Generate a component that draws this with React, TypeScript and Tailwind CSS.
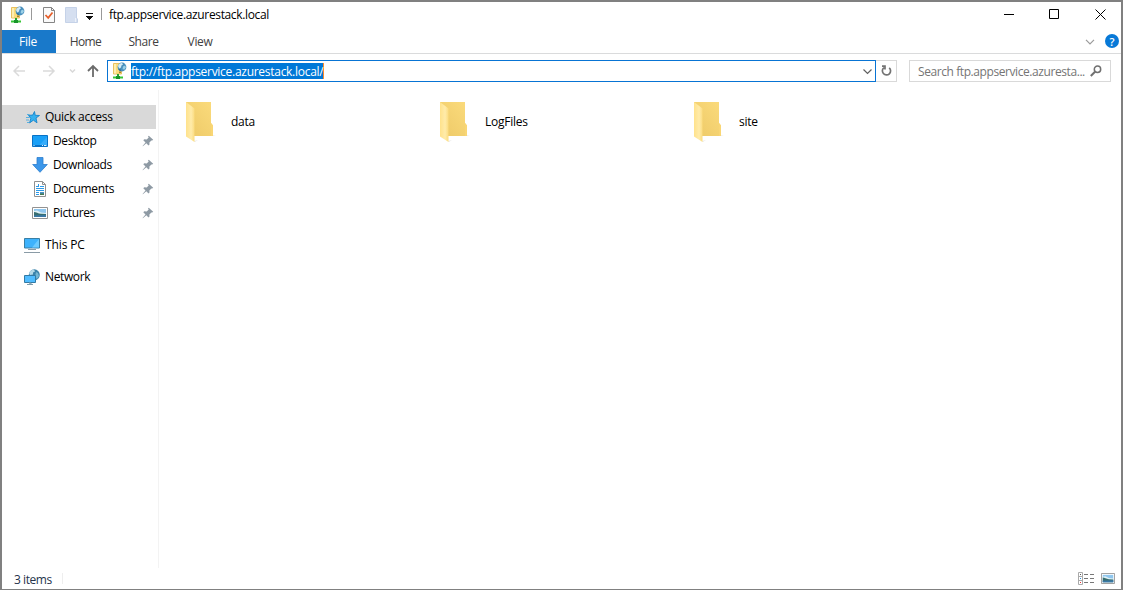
import React from "react";

function FtpIcon() {
  return (
    <svg width="16" height="18" viewBox="0 0 16 18" className="shrink-0">
      <path d="M1.500 1.500h8v10.500h-8z" fill="#fbdc7c" stroke="#e8c060" />
      <path d="M2 2h2v9.500H2z" fill="#fdeeb0" />
      <path d="M7 9.500h2V11H7z" fill="#a8842c" />
      <circle cx="10" cy="5" r="4.400" fill="#4a90bd" />
      <path d="M6 4c.7-1.800 2.300-3 4-3l1 1.400-1.600 1-.4 2-1.800 1.200z" fill="#d5ebf5" />
      <path d="M11 4.600l2.200-1.200.6 2-1.200 2.200-2-.4z" fill="#9bd0e8" />
      <path d="M6.100 7.300l2.200-.3 1 2.300c-1.400-.1-2.500-.9-3.200-2z" fill="#2c6d9b" />
      <path d="M5 12h2v2.500H5z" fill="#24a52c" />
      <path d="M1 14.500h10v2H1z" fill="#35c535" />
      <path d="M4 14h4v3H4z" fill="#18942a" />
    </svg>
  );
}

function PropertiesIcon() {
  return (
    <svg width="12" height="16" viewBox="0 0 12 16" className="shrink-0">
      <path d="M.5.500h8l3 3v12H.5z" fill="#fafafa" stroke="#858585" />
      <path d="M8.500.5v3h3" fill="none" stroke="#858585" />
      <path d="M2.500 8l2.700 2.900L9.500 5.500" fill="none" stroke="#e65f2b" strokeWidth="1.700" />
    </svg>
  );
}

function NewFolderIcon() {
  return (
    <svg width="13" height="16" viewBox="0 0 13 16" className="shrink-0">
      <path d="M.5.500h11v10.500l1 1v3.500H.5z" fill="#d5dff0" stroke="#c5d2e8" />
      <path d="M10.500 11v4" stroke="#edf2fa" />
    </svg>
  );
}

function StarIcon() {
  return (
    <svg width="14" height="13" viewBox="0 0 14 13" className="shrink-0">
      <path d="M8.500.500l.7 3.800 4.300.2-3.500 2.500 1 4.800-3.600-2.600-3.800 2.700 1.200-4.500L2.500 4.300l4.200-.2z" fill="#35b0ee" stroke="#1683cb" strokeWidth=".9" />
      <path d="M1 3.500h2.500M0 6.500h3.500M0 9h3M1 11.500h2" stroke="#4bacdf" strokeWidth=".9" />
    </svg>
  );
}

function DesktopIcon() {
  return (
    <svg width="16" height="12" viewBox="0 0 16 12" className="shrink-0">
      <path d="M.5.500h15v11H.5z" fill="#19a0f7" stroke="#0872c6" />
      <path d="M7 10.500L15 2v8.500z" fill="#38adfb" />
      <path d="M1 10.500h14" stroke="#0872c6" />
      <path d="M1.500 10.500h1M10 10.500h1M12 10.500h2.500" stroke="#d7f0ff" />
    </svg>
  );
}

function DownloadIcon() {
  return (
    <svg width="16" height="16" viewBox="0 0 16 16" className="shrink-0">
      <path d="M5 .5h6v7h4.300L8 15.300.7 7.500H5z" fill="#3c97ea" stroke="#2c7dce" strokeWidth=".8" />
    </svg>
  );
}

function DocumentIcon() {
  return (
    <svg width="12" height="16" viewBox="0 0 12 16" className="shrink-0">
      <path d="M.5.500h8l3 3v12H.5z" fill="#fff" stroke="#909090" />
      <path d="M8.500.500v3h3" fill="none" stroke="#909090" />
      <path d="M2 5.500h2M4.500 3v3M6 5.500h4M2 7.500h8M2 9.500h8M2 11.500h3M2 13.500h3" fill="none" stroke="#2d9ae8" />
      <path d="M6 11h4v3H6z" fill="#4b91c4" />
      <path d="M6 12.500h4V14H6z" fill="#477b54" />
    </svg>
  );
}

function PictureIcon({ small = false }: { small?: boolean }) {
  return (
    <svg width={small ? 14 : 16} height={small ? 11 : 12} viewBox="0 0 16 12" preserveAspectRatio="none" className="shrink-0">
      <path d="M.5.500h15v11H.5z" fill="#fff" stroke="#929292" />
      <path d="M2 2h12v8H2z" fill="#8fc6ee" />
      <path d="M2 4l3-.5 4 2 5 .5v2H2z" fill="#dff1f6" />
      <path d="M2 5c2 .2 4 1.500 7 1.800l5 .2v3H2z" fill="#386e70" />
      <path d="M2 8.500l12-.5v2H2z" fill="#3a78a6" />
    </svg>
  );
}

function ComputerIcon() {
  return (
    <svg width="16" height="15" viewBox="0 0 16 15" className="shrink-0">
      <path d="M.5.500h15v9.500H.5z" fill="#3db2fc" stroke="#397fa5" />
      <path d="M8 9.500L15 1v8.500z" fill="#6bcaff" />
      <path d="M6 10.500h4v1H6z" fill="#b9cbd4" />
      <path d="M4 11.500h8M0 14.500h16" stroke="#8a9ba6" />
    </svg>
  );
}

function NetworkIcon() {
  return (
    <svg width="16" height="16" viewBox="0 0 16 16" className="shrink-0">
      <circle cx="10.300" cy="5.800" r="5.500" fill="#3b83aa" />
      <path d="M5 4c1-2 3-3.500 5-3.500l1 2-2 1v2L6 6z" fill="#b6d9e7" />
      <path d="M12 3l2 1 1 3-2 3-2-2z" fill="#73b5d2" />
      <path d="M.5 6.500h11v7H.5z" fill="#50bcff" stroke="#327aa5" />
      <path d="M5 14h2v1H5M3 15.500h6" fill="none" stroke="#7e9cab" />
    </svg>
  );
}

function Pin() {
  return (
    <svg width="12" height="12" viewBox="0 0 12 12" className="shrink-0">
      <path d="M6.800.800l4.400 4-1 .8-.8-.1-2 2 .1 2.100-1 1-2.200-2.400L.9 11.300l-.3-.3 2.900-3.500-2.200-2.200 1-1 2.400.1 2-1.900-.7-.9z" fill="#8e9aa4" />
    </svg>
  );
}

function Folder() {
  return (
    <svg width="30" height="42" viewBox="0 0 30 42" className="shrink-0">
      <defs>
        <linearGradient id="folderBack" x1="0" y1="1" x2="1" y2="0">
          <stop stopColor="#edc967" />
          <stop offset="1" stopColor="#fbdb7c" />
        </linearGradient>
        <linearGradient id="folderFront">
          <stop stopColor="#ffe28b" />
          <stop offset=".6" stopColor="#ffebaa" />
          <stop offset="1" stopColor="#fbdc80" />
        </linearGradient>
      </defs>
      <path d="M8 40l4-1-3 2zM25 34h5l-4 1z" fill="#e9e9e9" />
      <path d="M0 1h25v21l2 2.500V35H0z" fill="url(#folderBack)" />
      <path d="M0 1l8.500 6.500V41L0 35.500z" fill="url(#folderFront)" />
      <path d="M25 22l2 2.500V35h-2z" fill="#f9d675" />
    </svg>
  );
}

const quickLinks = [
  { label: "Desktop", icon: <DesktopIcon />, text: "tracking-[-0.4px]" },
  { label: "Downloads", icon: <DownloadIcon />, text: "tracking-[-0.43px]" },
  { label: "Documents", icon: <DocumentIcon />, text: "tracking-[-0.36px]" },
  { label: "Pictures", icon: <PictureIcon />, text: "tracking-[-0.38px]" },
];

const folders = ["data", "LogFiles", "site"];

export default function App() {
  return (
    <div className="flex h-[590px] w-[1123px] flex-col overflow-hidden border-2 border-b border-[#808080] bg-white font-['Open_Sans','Noto_Sans',sans-serif] text-[12px] leading-4 tracking-[-0.25px] text-black">
      <header className="flex h-7 shrink-0 items-center pl-2">
        <span className="-mt-[3px]"><FtpIcon /></span>
        <span className="-mt-1 ml-[5px] h-3 w-px bg-[#999]" />
        <span className="-mt-0.5 ml-[11px]"><PropertiesIcon /></span>
        <span className="-mt-0.5 ml-[10px]"><NewFolderIcon /></span>
        <svg width="8" height="7" viewBox="0 0 8 7" className="ml-2"><path d="M0 .5h7M0 3.500h7M1 4.500h5M2 5.500h3M3 6.500h1" stroke="#111" /></svg>
        <span className="-mt-1 ml-[7px] h-3 w-px bg-[#999]" />
        <h1 className="-mt-0.5 ml-[7px] whitespace-nowrap tracking-[-0.36px]">ftp.appservice.azurestack.local</h1>
        <svg width="105" height="12" viewBox="0 0 105 12" className="-mt-[5px] ml-auto mr-[13px]" fill="none" stroke="#000">
          <path d="M1 6.500h10M46.500 1.500h9v9h-9zM92.500 1.500l10 10M102.500 1.500l-10 10" />
        </svg>
      </header>

      <nav className="flex h-6 shrink-0 border-b border-[#dadbdc] text-[#414141]">
        <span className="flex w-[54px] items-center justify-center bg-[#1979ca] pr-0.5 pt-px text-white">File</span>
        <span className="flex w-[59px] items-center justify-center pt-px tracking-[-0.6px]">Home</span>
        <span className="flex w-[57px] items-center justify-center pt-px tracking-[-0.45px]">Share</span>
        <span className="flex w-[56px] items-center justify-center pt-px tracking-[-0.35px]">View</span>
        <div className="ml-auto flex items-center pr-0.5">
          <svg width="10" height="6" viewBox="0 0 10 6" className="mr-[10px]" fill="none" stroke="#9b9b9b" strokeWidth="1.200"><path d="M1 .8l4 4 4-4" /></svg>
          <span className="-mt-px flex size-[14px] items-center justify-center rounded-full bg-[#0879d7] text-[11px] font-semibold leading-none text-white">?</span>
        </div>
      </nav>

      <div className="flex h-[34px] shrink-0 items-center pl-[11px]">
        <svg width="86" height="14" viewBox="0 0 86 14" className="shrink-0" fill="none">
          <path d="M12 7H1M6 2L1 7l5 5M30 7h11M36 2l5 5-5 5" stroke="#dadada" strokeWidth="1.500" />
          <path d="M57 5.500l2.500 2.500 2.500-2.500" stroke="#d8d8d8" strokeWidth="1.500" />
          <path d="M80 13V2M75 7l5-5 5 5" stroke="#6b6b6b" strokeWidth="1.800" />
        </svg>
        <div className="ml-2 flex h-[22px] w-[769px] shrink-0 items-center border border-[#0874d4] pl-1">
          <FtpIcon />
          <span className="ml-[3px] h-4 whitespace-nowrap border-r border-[#ff8a28] bg-[#0078d7] tracking-[-0.28px] text-white"><span className="relative top-px">ftp://ftp.appservice.azurestack.local/</span></span>
          <svg width="9" height="6" viewBox="0 0 9 6" className="ml-auto mr-[3px] mt-0.5" fill="none" stroke="#606060" strokeWidth="1.200"><path d="M.5.500l4 4 4-4" /></svg>
        </div>
        <div className="flex h-[22px] w-[21px] shrink-0 items-center justify-center border border-l-0 border-[#d9d9d9]">
          <svg width="11" height="12" viewBox="0 0 11 12" fill="none" stroke="#737373" strokeWidth="1.700"><path d="M8.200 2.800A4.100 4.100 0 1 1 3 2.600M1 1.200h3v3.200" /></svg>
        </div>
        <div className="ml-3 flex h-[22px] w-[202px] shrink-0 items-center border border-[#d9d9d9] pl-2 text-[#757575]">
          <span className="whitespace-nowrap pt-px tracking-[-0.42px]">Search ftp.appservice.azuresta...</span>
          <svg width="12" height="12" viewBox="0 0 12 12" className="ml-auto mr-2 shrink-0" fill="none" stroke="#707070"><circle cx="7.500" cy="4.200" r="3.200" strokeWidth="1.500" /><path d="M5 6.700L.8 11" strokeWidth="2" /></svg>
        </div>
      </div>

      <div className="flex min-h-0 flex-1 pt-0.5">
        <aside className="w-[157px] shrink-0 border-r border-[#f3f3f3] pt-[15px]">
          <div className="flex h-6 w-[154px] items-center bg-[#d9d9d9] pl-6">
            <StarIcon /><span className="ml-[5px] tracking-[-0.3px]">Quick access</span>
          </div>
          {quickLinks.map((item) => (
            <div key={item.label} className="flex h-6 items-center pl-[30px] pr-1">
              <span className="flex w-4 justify-center">{item.icon}</span>
              <span className={"ml-[5px] " + item.text}>{item.label}</span>
              <span className="ml-auto"><Pin /></span>
            </div>
          ))}
          <div className="mt-2 flex h-6 items-center pl-[22px]"><ComputerIcon /><span className="ml-[5px] tracking-[-0.12px]">This PC</span></div>
          <div className="mt-2 flex h-6 items-center pl-[22px]"><NetworkIcon /><span className="ml-[5px] tracking-[-0.38px]">Network</span></div>
        </aside>
        <main className="grid h-[62px] grid-cols-[254px_254px_254px] pl-[27px] pt-[11px]">
          {folders.map((name) => (
            <div key={name} className="flex h-[42px] items-center"><Folder /><span className="-mt-px ml-[15px]">{name}</span></div>
          ))}
        </main>
      </div>

      <footer className="flex h-[21px] shrink-0 items-center pl-3 text-[#25334b]">
        <span className="mt-0.5 tracking-[-0.45px]">3 items</span>
        <span className="ml-[10px] h-[11px] w-px bg-[#eee]" />
        <div className="ml-auto mr-[6px] flex items-center gap-[7px]">
          <svg width="16" height="13" viewBox="0 0 16 13" fill="none">
            <path d="M.5.500h4v12h-4zM.5 4.500h4M.5 8.500h4" stroke="#aaa" />
            <path d="M6 2.500h4M12 2.500h4M6 6.500h4M12 6.500h4M6 10.500h4M12 10.500h4" stroke="#777" />
            <path d="M2 2.500h1" stroke="#555" /><path d="M2 6.500h1" stroke="#288fdf" /><path d="M2 10.500h1" stroke="#e33" />
          </svg>
          <PictureIcon small />
        </div>
      </footer>
    </div>
  );
}
